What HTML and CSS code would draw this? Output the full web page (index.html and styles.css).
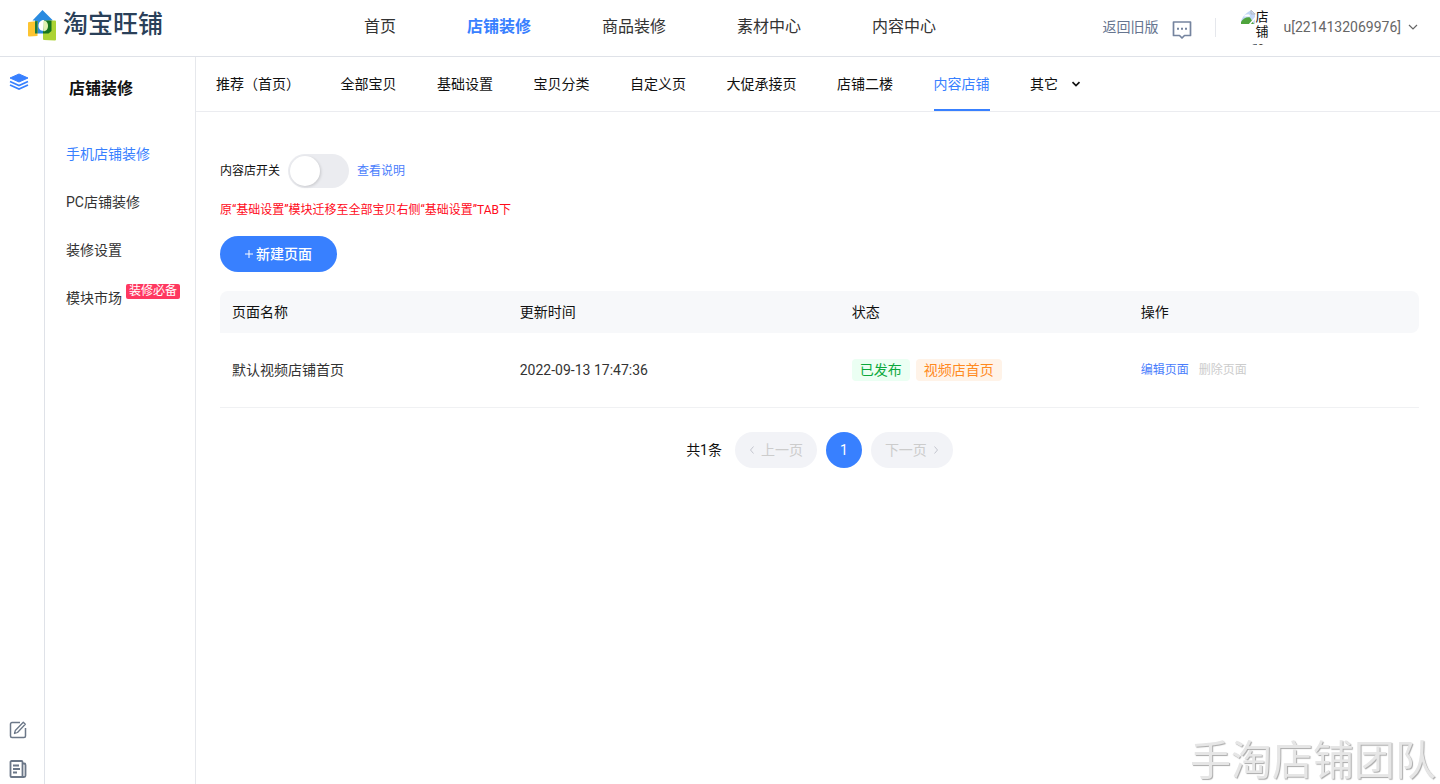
FILE: index.html
```html
<!DOCTYPE html>
<html lang="zh-CN">
<head>
<meta charset="utf-8">
<meta name="viewport" content="width=device-width, initial-scale=1">
<title>淘宝旺铺</title>
<link rel="stylesheet" href="styles.css">
</head>
<body>
<div class="app">
  <header class="header">
    <a class="logo" href="#">
      <svg class="logo-mark" width="28" height="31" viewBox="0 0 28 31" aria-hidden="true">
        <path d="M14.500 0 25 10.500H21.500v13H7v-13H4.500z" fill="#2a8be0"/>
        <path d="M1 12 9.500 11v15L1 26.500Q0 26.500 0 25.500V13q0-1 1-1z" fill="#fdc431"/>
        <path d="M16 10.800 27 10.500q1 0 1 1v18q0 1-1 1L16 30q-1 0-1-1V21z" fill="#acd333"/>
        <path d="M7 11.300 9.500 11v12.500H7z" fill="#187a3c"/>
        <path d="M16 10.800 23.500 10.600V21l-3 2.500H15V20z" fill="#16741f"/>
        <path d="M16 10c-3.500 0-5.500 2.500-5.500 5.800S12.500 21 15.500 21z" fill="#fff"/>
        <path d="M15.500 10.500v10.800c3 0 4.500-2.600 4.500-5.300s-1.500-5.500-4.500-5.500z" fill="#dff0b0"/>
      </svg>
      <span class="logo-text">淘宝旺铺</span>
    </a>
    <nav class="nav">
      <a href="#">首页</a>
      <a class="active" href="#">店铺装修</a>
      <a href="#">商品装修</a>
      <a href="#">素材中心</a>
      <a href="#">内容中心</a>
    </nav>
    <div class="account">
      <a class="old-link" href="#">返回旧版</a>
      <button class="icon-button message" type="button" aria-label="消息">
        <svg width="20" height="20" viewBox="0 0 20 20" fill="none" stroke="#75849f" stroke-width="1.700" stroke-linejoin="round">
          <path d="M1.500 2h17v13.500h-6L10 18l-2.500-2.500h-6z"/>
          <path d="M5 8.800h2M9 8.800h2M13 8.800h2" stroke-width="2"/>
        </svg>
      </button>
      <span class="divider"></span>
      <span class="avatar">
        <svg width="16" height="16" viewBox="0 0 16 16" aria-hidden="true">
          <path d="M1 1h10l4 4v10H1z" fill="#c4d8f7"/>
          <path d="M4 7.500a2 2 0 0 1 2-2h1a2 2 0 0 1 3 2z" fill="#fff"/>
          <path d="M1 15v-2c2-3.500 6-5.500 9-4.500l4 6.500z" fill="#4fa43d"/>
          <path d="M9 16 16 8" stroke="#fff" stroke-width="1.500"/>
          <path d="M11 .5v4.500h4.500M1 1h10l4 4" fill="none" stroke="#b0b0b0" stroke-width=".7"/>
        </svg>店铺logo
      </span>
      <button class="user" type="button">u[2214132069976]
        <svg width="10" height="10" viewBox="0 0 10 10" fill="none" stroke="#666" stroke-width="1.200"><path d="M1 3l4 4 4-4"/></svg>
      </button>
    </div>
  </header>
  <div class="body">
    <aside class="rail">
      <button class="icon-button" type="button" aria-label="店铺">
        <svg width="20" height="18" viewBox="0 0 20 18">
          <path d="M10 1 19 5 10 9 1 5z" fill="#3880ff" stroke="#3880ff" stroke-linejoin="round"/>
          <path d="M1 8.500l9 4 9-4M1 12l9 4 9-4" fill="none" stroke="#3880ff" stroke-width="1.700"/>
        </svg>
      </button>
      <div class="rail-bottom">
        <button class="icon-button" type="button" aria-label="反馈">
          <svg width="18" height="18" viewBox="0 0 18 18" fill="none" stroke="#6b7788" stroke-width="1.500" stroke-linejoin="round">
            <path d="M11 1.500H3A1.500 1.500 0 0 0 1.500 3v12A1.500 1.500 0 0 0 3 16.500h12a1.500 1.500 0 0 0 1.500-1.500V7"/>
            <path d="M14.300 1.200l2 2L8.500 11.500l-3 1 .8-3z" stroke-width="1.300"/>
          </svg>
        </button>
        <button class="icon-button" type="button" aria-label="文档">
          <svg width="18" height="18" viewBox="0 0 18 18" fill="none" stroke="#6b7788" stroke-width="1.800" stroke-linejoin="round">
            <path d="M2.500 1h10a1 1 0 0 1 1 1v15h-11a1 1 0 0 1-1-1V2a1 1 0 0 1 1-1z"/>
            <path d="M13.500 3.500H15a1.500 1.500 0 0 1 1.500 1.500v10.500a1.500 1.500 0 0 1-1.500 1.500h-2"/>
            <path d="M4 5.500h6M4 9h7M4 12.500h4"/>
          </svg>
        </button>
      </div>
    </aside>
    <aside class="sidebar">
      <h2>店铺装修</h2>
      <nav class="menu">
        <a class="active" href="#">手机店铺装修</a>
        <a href="#">PC店铺装修</a>
        <a href="#">装修设置</a>
        <a href="#">模块市场<span class="badge">装修必备</span></a>
      </nav>
    </aside>
    <main class="main">
      <div class="tab-bar">
        <nav class="tabs">
          <a href="#">推荐（首页）</a>
          <a href="#">全部宝贝</a>
          <a href="#">基础设置</a>
          <a href="#">宝贝分类</a>
          <a href="#">自定义页</a>
          <a href="#">大促承接页</a>
          <a href="#">店铺二楼</a>
          <a class="active" href="#">内容店铺</a>
          <button type="button">其它
            <svg width="10" height="10" viewBox="0 0 10 10" fill="none" stroke="#111" stroke-width="1.700"><path d="M1.500 3.200 5 6.500l3.500-3.300"/></svg>
          </button>
        </nav>
      </div>
      <section class="content">
        <div class="switch-row">
          <label for="shop-switch">内容店开关</label>
          <input class="switch" id="shop-switch" type="checkbox" role="switch">
          <a href="#">查看说明</a>
        </div>
        <p class="notice">原“基础设置”模块迁移至全部宝贝右侧“基础设置”TAB下</p>
        <button class="create" type="button">
          <svg width="8" height="8" viewBox="0 0 8 8" stroke="#fff"><path d="M4 0v8M0 4h8"/></svg>新建页面
        </button>
        <table class="pages">
          <thead>
            <tr><th class="col-name">页面名称</th><th class="col-time">更新时间</th><th class="col-status">状态</th><th>操作</th></tr>
          </thead>
          <tbody>
            <tr>
              <td>默认视频店铺首页</td>
              <td>2022-09-13 17:47:36</td>
              <td><div class="tags"><span class="tag green">已发布</span><span class="tag orange">视频店首页</span></div></td>
              <td><div class="actions"><a href="#">编辑页面</a><button type="button" disabled>删除页面</button></div></td>
            </tr>
          </tbody>
        </table>
        <nav class="pagination" aria-label="分页">
          <span class="total">共1条</span>
          <button type="button" disabled><svg width="6" height="10" viewBox="0 0 6 10" fill="none" stroke="#c4c6cf"><path d="M4.500 1.500 1.500 5l3 3.500"/></svg>上一页</button>
          <button class="current" type="button">1</button>
          <button type="button" disabled>下一页<svg width="6" height="10" viewBox="0 0 6 10" fill="none" stroke="#c4c6cf"><path d="M1.500 1.500 4.500 5l-3 3.500"/></svg></button>
        </nav>
      </section>
    </main>
  </div>
</div>
<div class="watermark">手淘店铺团队</div>
</body>
</html>
```
FILE: styles.css
```css
* { box-sizing: border-box; }
body {
  margin: 0;
  font: 14px/20px Roboto, "Noto Sans CJK SC", sans-serif;
  color: #333;
  background: #fff;
}
a { color: inherit; text-decoration: none; }
button { padding: 0; border: 0; background: none; font: inherit; color: inherit; }
svg { display: block; flex: none; }
.app { display: flex; flex-direction: column; min-height: 100vh; }

.header {
  display: flex;
  align-items: center;
  height: 57px;
  padding: 0 22px 2px 28px;
  border-bottom: 1px solid #dfe2e8;
}
.logo { display: flex; align-items: center; gap: 7px; width: 336px; padding-bottom: 4px; }
.logo-text { font-size: 25px; line-height: 30px; font-weight: 500; color: #2a4059; }
.nav { display: flex; gap: 71px; font-size: 16px; line-height: 24px; white-space: nowrap; }
.nav .active { color: #3880ff; font-weight: 700; }
.account { display: flex; align-items: center; margin-left: auto; white-space: nowrap; }
.old-link { color: #66758f; }
.icon-button { display: block; }
.message { margin: 6px 23px 0 13px; }
.divider { width: 1px; height: 19px; margin-right: 24px; background: #e5e7ec; }
.avatar {
  width: 36px;
  height: 36px;
  margin-right: 8px;
  overflow: hidden;
  border-radius: 50%;
  font-size: 13px;
  line-height: 15px;
  color: #111;
  white-space: normal;
}
.avatar svg { float: left; }
.user { display: flex; align-items: center; gap: 7px; color: #666; }

.body { display: flex; flex: 1; }
.rail {
  display: flex;
  flex-direction: column;
  justify-content: space-between;
  width: 45px;
  padding: 16px 9px 6px;
  border-right: 1px solid #dfe2e8;
}
.rail-bottom { display: flex; flex-direction: column; gap: 21px; }
.sidebar { width: 151px; padding: 20px 0 0 21px; border-right: 1px solid #e6e8ec; white-space: nowrap; }
.sidebar h2 { margin: 0 0 29px 3px; font-size: 16px; line-height: 24px; color: #111; }
.menu { display: flex; flex-direction: column; }
.menu a { display: flex; align-items: center; height: 48px; }
.menu .active { color: #3880ff; }
.badge {
  margin: 0 0 14px 4px;
  padding: 0 3px;
  border-radius: 2px;
  background: #ff3860;
  color: #fff;
  font-size: 12px;
  line-height: 15px;
}

.main { flex: 1; min-width: 0; color: #111; }
.tab-bar { padding: 0 20px; border-bottom: 1px solid #ebecf0; }
.tabs { display: flex; justify-content: space-between; max-width: 865px; height: 54px; white-space: nowrap; }
.tabs a, .tabs button { display: flex; align-items: center; gap: 13px; padding-top: 2px; border-bottom: 2px solid transparent; }
.tabs .active { color: #3880ff; border-color: #3880ff; }
.content { padding: 42px 21px 24px 24px; }
.switch-row { display: flex; align-items: center; gap: 8px; font-size: 12px; }
.switch-row a { color: #4a7dfc; }
.switch {
  appearance: none;
  display: flex;
  width: 61px;
  height: 34px;
  margin: 0;
  padding: 2px;
  border-radius: 17px;
  background: #ebecf0;
}
.switch::before {
  content: "";
  width: 30px;
  height: 30px;
  border-radius: 50%;
  background: #fff;
  box-shadow: 1px 1px 3px rgba(0, 0, 0, .15);
}
.notice { margin: 12px 0 16px; font-size: 12px; color: #ff0a1a; }
.create {
  display: flex;
  align-items: center;
  gap: 3px;
  height: 36px;
  padding: 0 25px;
  border-radius: 18px;
  background: #3880ff;
  color: #fff;
  font-weight: 500;
}
.pages { width: 100%; margin-top: 19px; border-collapse: separate; border-spacing: 0; table-layout: fixed; }
.col-name { width: 24%; }
.col-time { width: 27.7%; }
.col-status { width: 24.1%; }
.pages th { height: 42px; padding: 0 12px; background: #f7f8fa; font-weight: 400; text-align: left; }
.pages th:first-child { border-top-left-radius: 8px; }
.pages th:last-child { border-radius: 0 8px 8px 0; }
.pages td { height: 75px; padding: 0 12px; border-bottom: 1px solid #f0f1f3; color: #333; }
.tags { display: flex; gap: 6px; }
.tag { padding: 0 8px; border-radius: 4px; line-height: 22px; }
.tags .green { background: #ebfff3; color: #0ca83c; }
.tags .orange { background: #fff3e8; color: #ff8a1f; }
.actions { display: flex; gap: 10px; font-size: 12px; }
.actions a { color: #4a7dfc; }
.actions button { color: #ccc; }
.pagination { display: flex; align-items: center; justify-content: center; gap: 9px; margin-top: 24px; }
.pagination .total { margin-right: 4px; }
.pagination button {
  display: flex;
  align-items: center;
  justify-content: center;
  gap: 6px;
  height: 36px;
  padding: 0 14px;
  border-radius: 18px;
  background: #f2f3f7;
  color: #ccc;
}
.pagination .current { background: #3880ff; color: #fff; }
.watermark {
  position: fixed;
  right: 4px;
  bottom: 0;
  font-size: 41px;
  line-height: 46px;
  font-weight: 400;
  color: #e6e6e6;
  text-shadow: 1px 1px 1px #aaa;
  pointer-events: none;
}
```
